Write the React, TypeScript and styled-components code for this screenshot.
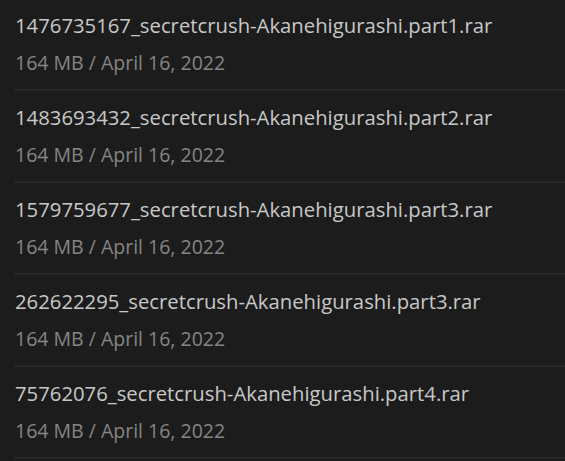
import React from "react";
import styled, { createGlobalStyle } from "styled-components";

const Global = createGlobalStyle`
  html, body { margin: 0; padding: 0; background: #1c1c1c; }
  body { font-family: "Open Sans", "Noto Sans", sans-serif; }
`;

const List = styled.ul`
  list-style: none;
  margin: 0;
  padding: 0 0 0 14px;
  background: #1c1c1c;
  width: 565px;
  box-sizing: border-box;
`;

const Row = styled.li`
  display: flex;
  flex-direction: column;
  height: 91px;
  margin-bottom: 1px;
  box-sizing: border-box;
  padding: 10px 0 0 1px;
  border-bottom: 2px solid #272727;
`;

const Title = styled.div`
  font-size: 20.3px;
  line-height: 30px;
  color: #c8c8c8;
  white-space: nowrap;
`;

const Meta = styled.div`
  font-size: 19.5px;
  line-height: 26px;
  margin-top: 10px;
  color: #858585;
  white-space: nowrap;
`;

const files = [
  "1476735167_secretcrush-Akanehigurashi.part1.rar",
  "1483693432_secretcrush-Akanehigurashi.part2.rar",
  "1579759677_secretcrush-Akanehigurashi.part3.rar",
  "262622295_secretcrush-Akanehigurashi.part3.rar",
  "75762076_secretcrush-Akanehigurashi.part4.rar",
];

export default function App() {
  return (
    <>
      <Global />
      <List>
        {files.map((f) => (
          <Row key={f}>
            <Title>{f}</Title>
            <Meta>164 MB / April 16, 2022</Meta>
          </Row>
        ))}
      </List>
    </>
  );
}
